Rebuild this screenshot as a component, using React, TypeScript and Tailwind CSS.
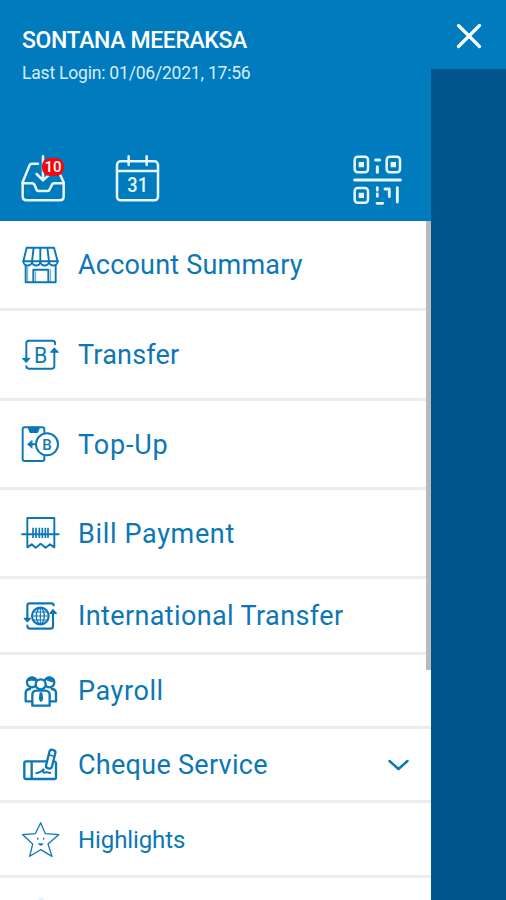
import type { ReactNode } from "react";
import clsx from "clsx";

interface IconProps {
  children: ReactNode;
  className?: string;
  strokeWidth?: number;
}

function MenuIcon({ children, className, strokeWidth = 5.8 }: IconProps) {
  return (
    <svg
      viewBox="0 0 120 120"
      className={clsx("size-10 shrink-0 font-['Roboto',sans-serif]", className)}
      fill="none"
      stroke="currentColor"
      strokeWidth={strokeWidth}
      strokeLinecap="round"
      strokeLinejoin="round"
    >
      {children}
    </svg>
  );
}

function HeaderIcon({ children }: IconProps) {
  return (
    <svg
      viewBox="0 0 150 150"
      className="size-[50px] font-['Roboto',sans-serif]"
      fill="none"
      stroke="currentColor"
      strokeWidth={7.5}
      strokeLinecap="round"
      strokeLinejoin="round"
    >
      {children}
    </svg>
  );
}

const ShopIcon = () => (
  <MenuIcon>
    <path d="M20 8H102L113 49H10Z M41 8L36 49 M61 8V49 M82 8L87 49" />
    <path d="M10 49c0 17 26 17 26 0c0 17 25 17 25 0c0 17 26 17 26 0c0 17 26 17 26 0" />
    <path d="M17 63V112H107V63 M40 112V74H85V112" />
    <path d="M23 66V112 M47 80V112 M92 74V112" strokeWidth={2} />
  </MenuIcon>
);

const TransferIcon = () => (
  <MenuIcon>
    <path d="M105 28V24Q105 17 98 17H26Q19 17 19 25V78" />
    <path d="M19 94Q19 101 27 101H96Q103 101 103 94V42" />
    <path d="M8 70H30L19 82Z M92 51L103 39L115 51Z" fill="currentColor" strokeWidth={3} />
    <text x="62" y="84" textAnchor="middle" fontSize="68" fill="currentColor" stroke="none" textLength="40" lengthAdjust="spacingAndGlyphs">B</text>
  </MenuIcon>
);

const TopUpIcon = () => (
  <MenuIcon>
    <path d="M73 27V16Q73 10 67 10H14Q8 10 8 16V105Q8 111 14 111H67Q73 111 73 105V96" />
    <path d="M26 11H57L52 24H31Z" fill="currentColor" />
    <circle cx="81" cy="61" r="33" />
    <path d="M46 61H25" />
    <path d="M35 50L24 61L35 72Z" fill="currentColor" strokeWidth={3} />
    <text x="81" y="77" textAnchor="middle" fontSize="45" fontWeight="500" fill="currentColor" stroke="none">B</text>
  </MenuIcon>
);

const BillIcon = () => (
  <MenuIcon>
    <path d="M22 64V15H103V64 M6 64H116 M22 64V103L35 94L47 104L62 92L77 104L90 94L103 103V64" />
    <path d="M39 44V75 M48 44V75 M58 44V75 M67 44V75 M76 44V75 M84 44V75" strokeWidth={5} strokeLinecap="butt" />
  </MenuIcon>
);

const GlobeTransferIcon = () => (
  <MenuIcon strokeWidth={6.5}>
    <path d="M101 28Q101 22 94 22H29Q22 22 22 29V74" />
    <path d="M22 89Q22 98 31 98H92Q99 98 99 91V45" />
    <path d="M13 67H31L22 77Z M90 52L99 41L109 52Z" fill="currentColor" strokeWidth={4} />
    <circle cx="61" cy="60" r="25" />
    <ellipse cx="61" cy="60" rx="12" ry="24" strokeWidth={4} />
    <path d="M37 60H85 M61 36V84 M41 48H81 M41 72H81" strokeWidth={3.5} />
  </MenuIcon>
);

const PayrollIcon = () => (
  <MenuIcon strokeWidth={7}>
    <circle cx="36" cy="34" r="15" />
    <circle cx="88" cy="34" r="15" />
    <path d="M22 29Q27 17 38 18Q48 19 50 29Q36 26 22 29Z M76 25Q79 17 88 18Q100 19 103 34Q88 31 76 25Z" fill="currentColor" strokeWidth={3} />
    <path d="M37 91H17V65Q18 54 30 54 M88 91H108V65Q107 54 95 54" />
    <circle cx="62" cy="40" r="15" fill="white" />
    <path d="M37 104V70Q38 59 50 59H76Q88 60 89 70V104Z" fill="white" />
    <path d="M61 66H65L67 84L63 90L59 84Z" fill="currentColor" strokeWidth={5} />
  </MenuIcon>
);

const ChequeIcon = () => (
  <MenuIcon strokeWidth={7}>
    <path d="M78 49H18Q13 49 13 54V97Q13 102 18 102H103Q108 102 108 97V55Q108 50 103 49 M35 49V102" />
    <path d="M49 85Q62 82 71 73Q67 83 73 83Q80 80 91 84" strokeWidth={6} />
    <rect x="83" y="14" width="18" height="57" rx="8" transform="rotate(14 92 43)" fill="white" />
    <path d="M88 30L99 33" strokeWidth={4} />
  </MenuIcon>
);

const StarIcon = () => (
  <MenuIcon strokeWidth={3.8}>
    <path d="M62 11L76 44L116 47L84 75L96 112L62 92L29 112L38 75L8 47L46 44Z" />
    <path d="M53 58V60 M71 58V60" strokeWidth={4.5} />
    <path d="M56 74H69Q67 79 62 79Q57 79 56 74Z" fill="currentColor" strokeWidth={2} />
  </MenuIcon>
);

interface MenuItem {
  label: string;
  icon: ReactNode;
  row: string;
  text: string;
  expandable?: boolean;
}

const items: MenuItem[] = [
  { label: "Account Summary", icon: <ShopIcon />, row: "h-[90px]", text: "text-[27px] tracking-[0.2px]" },
  { label: "Transfer", icon: <TransferIcon />, row: "h-[90px]", text: "text-[27px] tracking-[0.2px]" },
  { label: "Top-Up", icon: <TopUpIcon />, row: "h-[89px]", text: "text-[27px] tracking-[0.85px]" },
  { label: "Bill Payment", icon: <BillIcon />, row: "h-[89px]", text: "text-[27px] tracking-[0.65px]" },
  { label: "International Transfer", icon: <GlobeTransferIcon />, row: "h-[76px]", text: "text-[27px] tracking-[0.38px]" },
  { label: "Payroll", icon: <PayrollIcon />, row: "h-[74px]", text: "text-[27px] tracking-[0.6px]" },
  { label: "Cheque Service", icon: <ChequeIcon />, row: "h-[74px]", text: "text-[27px] tracking-[0.28px]", expandable: true },
  { label: "Highlights", icon: <StarIcon />, row: "h-[75px]", text: "text-[24px] tracking-[-0.1px]" },
];

function MenuRow({ label, icon, row, text, expandable }: MenuItem) {
  return (
    <button className={clsx("flex w-full shrink-0 items-center border-b-[3px] border-[#ececec] pr-5 pl-5 text-left text-[#0c77b6]", row)}>
      {icon}
      <span className={clsx("mt-px ml-[18px] flex-1 leading-8 whitespace-nowrap", text)}>{label}</span>
      {expandable && (
        <svg viewBox="0 0 24 24" className="size-6" fill="none" stroke="currentColor" strokeWidth={2.5} strokeLinecap="round" strokeLinejoin="round">
          <path d="M2.500 8L11.500 16L20.500 8" />
        </svg>
      )}
    </button>
  );
}

export default function App() {
  return (
    <div className="flex h-[900px] w-[506px] overflow-hidden bg-[#00558c] font-['Roboto','Liberation_Sans',sans-serif]">
      {/* Drawer */}
      <div className="flex w-[431px] flex-col bg-white">
        <header className="flex h-[221px] shrink-0 flex-col bg-[#007bbe] px-[22px] pt-[27px] text-white">
          <h1 className="text-[23px] leading-7 font-medium tracking-[-0.38px] whitespace-nowrap">SONTANA MEERAKSA</h1>
          <p className="mt-2 text-[17.5px] leading-5 tracking-[-0.2px] whitespace-nowrap text-[#d8edfa]">Last Login: 01/06/2021, 17:56</p>

          <div className="mt-[72px] -ml-1 flex items-center text-[#e9f6ff]">
            <button className="relative">
              <HeaderIcon>
                <path d="M60 26H42Q36 26 34 32L14 82V124Q14 136 26 136H126Q137 136 137 124V82L122 50" />
                <path d="M14 85H42Q48 85 50 91L56 105Q58 108 62 108H88Q92 108 94 105L101 91Q103 85 109 85H137" />
                <path d="M75 4V74 M56 57L75 76L94 59" />
              </HeaderIcon>
              <span className="absolute top-[3px] left-[24px] flex h-[18px] w-[22px] items-center justify-center rounded-lg bg-[#f5050f] text-[15px] leading-none font-medium text-white">
                10
              </span>
            </button>
            <button className="ml-11">
              <HeaderIcon>
                <rect x="15" y="19" width="123" height="117" rx="11" />
                <path d="M15 48H138 M50 4V30 M104 4V30" />
                <text x="77" y="110" textAnchor="middle" fontSize="63" fontWeight="500" fill="currentColor" stroke="none" textLength="62" lengthAdjust="spacingAndGlyphs">31</text>
              </HeaderIcon>
            </button>
            <button className="mr-[7px] ml-auto">
              <HeaderIcon>
                <rect x="8" y="5" width="40" height="47" rx="9" />
                <rect x="104" y="5" width="40" height="47" rx="9" />
                <rect x="8" y="99" width="40" height="44" rx="9" />
                <path d="M20 29H36 M116 29H132 M20 121H36" strokeWidth={16} strokeLinecap="butt" />
                <path d="M8 75H145 M71 15H83 M76 35V52" strokeWidth={9} />
                <path d="M76 98V106 M76 117V124 M75 145H92 M99 102H112V125 M136 98V141" strokeWidth={8.5} />
              </HeaderIcon>
            </button>
          </div>
        </header>

        <nav className="relative flex min-h-0 flex-1 flex-col overflow-hidden">
          {items.map((item) => (
            <MenuRow key={item.label} {...item} />
          ))}
          <div className="mt-5 ml-[38px] h-2 w-1.5 shrink-0 rounded-full bg-[#e3eff7]" />
          {/* Scrollbar thumb */}
          <div className="absolute top-0 right-0 h-[449px] w-[5px] bg-[#b9b9b9]" />
        </nav>
      </div>

      {/* Backdrop with close button */}
      <div className="flex flex-1 flex-col">
        <button aria-label="Close" className="flex h-[69px] items-center justify-center bg-[#007bbe] pt-[3px] text-white">
          <svg viewBox="0 0 26 26" className="size-[26px]" fill="none" stroke="currentColor" strokeWidth={3.2} strokeLinecap="round">
            <path d="M2.500 2.500L23.500 23.500 M23.500 2.500L2.500 23.500" />
          </svg>
        </button>
      </div>
    </div>
  );
}
